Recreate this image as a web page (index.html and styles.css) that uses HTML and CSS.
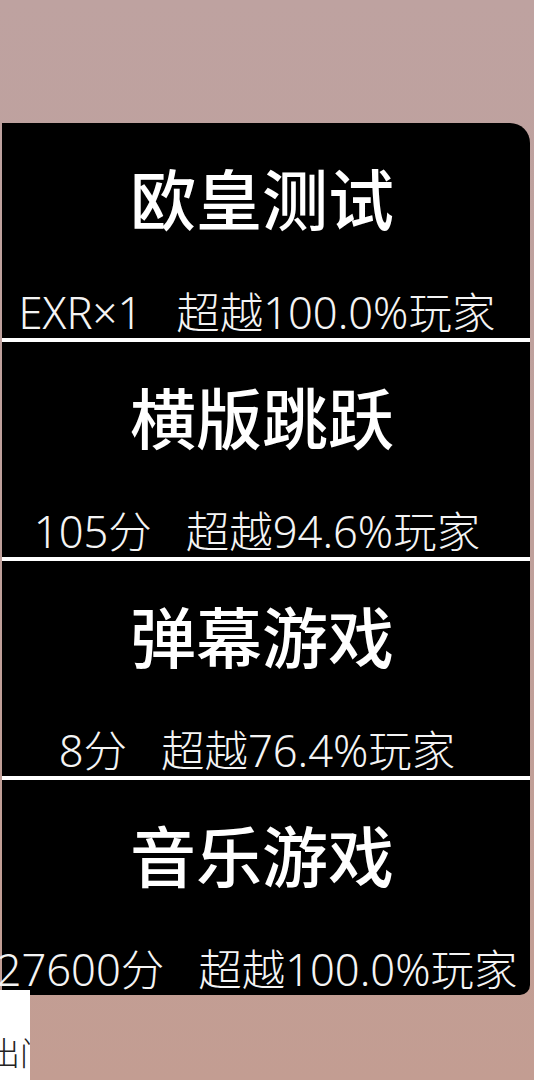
FILE: index.html
```html
<!DOCTYPE html>
<html lang="zh-CN">
<head>
<meta charset="utf-8">
<title>成绩</title>
<link rel="stylesheet" href="styles.css">
</head>
<body>
<div class="page">
  <div class="card">
    <section class="game">
      <h2 class="title">欧皇测试</h2>
      <p class="sub">EXR×1&nbsp;&nbsp;&nbsp;超越100.0%玩家</p>
    </section>
    <div class="sep"></div>
    <section class="game">
      <h2 class="title">横版跳跃</h2>
      <p class="sub">105分&nbsp;&nbsp;&nbsp;超越94.6%玩家</p>
    </section>
    <div class="sep"></div>
    <section class="game">
      <h2 class="title">弹幕游戏</h2>
      <p class="sub">8分&nbsp;&nbsp;&nbsp;超越76.4%玩家</p>
    </section>
    <div class="sep"></div>
    <section class="game">
      <h2 class="title">音乐游戏</h2>
      <p class="sub">27600分&nbsp;&nbsp;&nbsp;超越100.0%玩家</p>
    </section>
  </div>
  <div class="stub"><span class="stub-text">出门</span></div>
</div>
</body>
</html>
```

FILE: styles.css
```css
html, body {
  margin: 0;
  padding: 0;
}
body {
  width: 534px;
  height: 1080px;
  overflow: hidden;
  background: linear-gradient(180deg, #bea2a0 0%, #bfa09b 50%, #c39d92 100%);
  font-family: "Noto Sans CJK SC", "Noto Sans", sans-serif;
}
.page {
  display: flex;
  flex-direction: column;
  padding-top: 123px;
  height: 1080px;
  box-sizing: border-box;
}
.card {
  margin-left: 2px;
  width: 528px;
  background: #000;
  border-radius: 0 20px 10px 0;
  display: flex;
  flex-direction: column;
}
.game {
  height: 215px;
  display: flex;
  flex-direction: column;
  align-items: center;
  box-sizing: border-box;
  padding-top: 40px;
  padding-right: 8px;
}
.title {
  margin: 0;
  font-size: 66px;
  line-height: 66px;
  font-weight: 500;
  color: #fff;
  white-space: nowrap;
}
.sub {
  margin: 61px 0 0 0;
  font-family: "Noto Sans", "Noto Sans CJK SC", sans-serif;
  font-size: 43.5px;
  line-height: 44px;
  font-weight: 300;
  color: #f4f4f4;
  white-space: nowrap;
  padding-right: 10px;
}
.sep {
  height: 4px;
  background: #fff;
}
.stub {
  margin-top: -5px;
  width: 30px;
  flex: 1;
  background: #fff;
  overflow: hidden;
  box-sizing: border-box;
  padding-top: 48px;
}
.stub-text {
  display: block;
  margin-left: -12px;
  font-family: "Liberation Serif", "Noto Sans CJK SC", serif;
  font-size: 32px;
  line-height: 32px;
  font-weight: 300;
  color: #222;
  white-space: nowrap;
}
```
